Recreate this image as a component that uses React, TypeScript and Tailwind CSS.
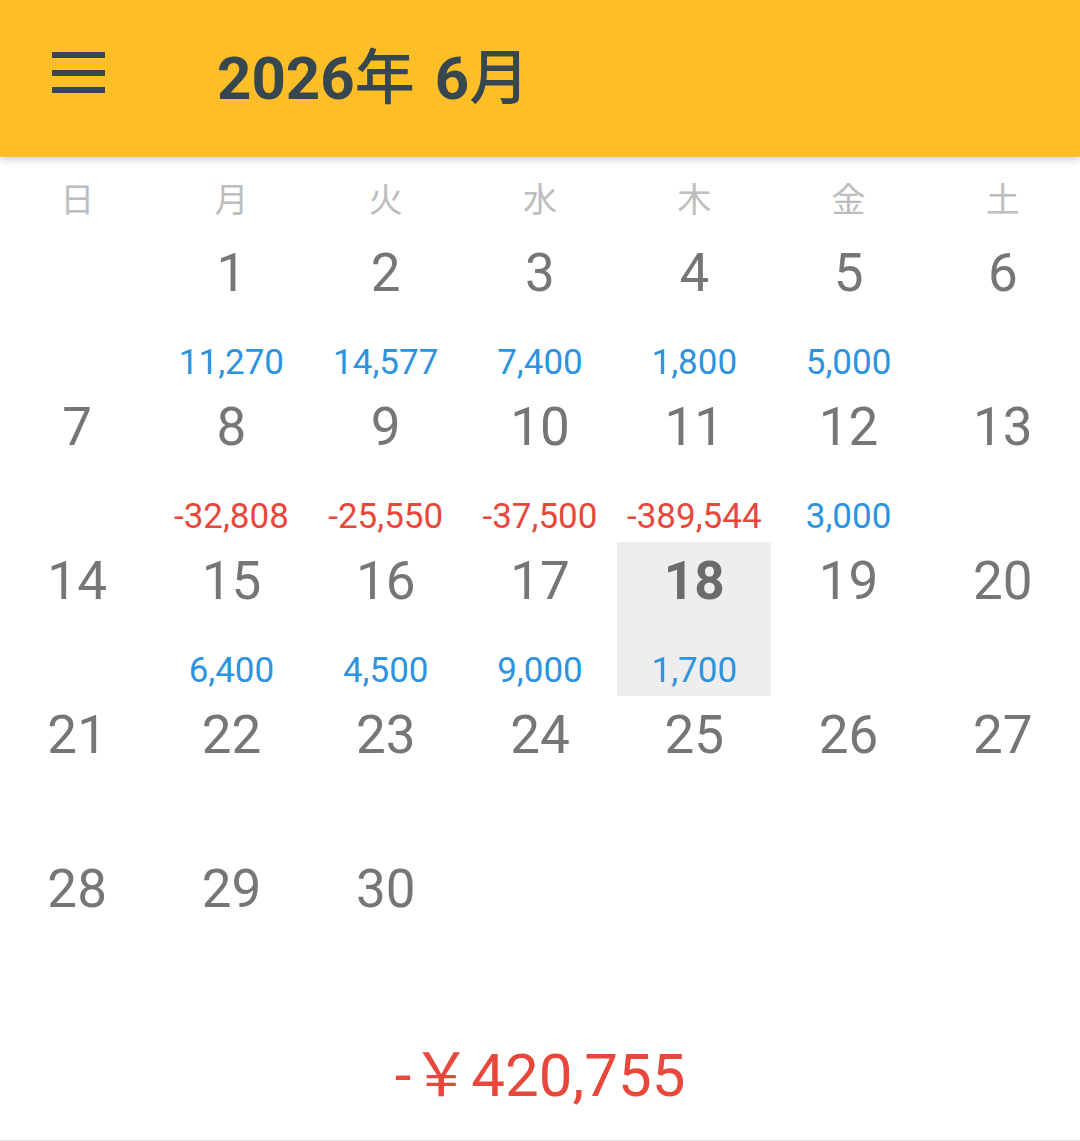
import React from "react";

type Day = { day: number; amount?: number; today?: boolean };

const WEEKDAYS = ["日", "月", "火", "水", "木", "金", "土"];

const amounts: Record<number, number> = {
  1: 11270,
  2: 14577,
  3: 7400,
  4: 1800,
  5: 5000,
  8: -32808,
  9: -25550,
  10: -37500,
  11: -389544,
  12: 3000,
  15: 6400,
  16: 4500,
  17: 9000,
  18: 1700,
};

// June 2026 starts on Monday
const buildCells = (): (Day | null)[] => {
  const cells: (Day | null)[] = [null];
  for (let d = 1; d <= 30; d++) {
    cells.push({ day: d, amount: amounts[d], today: d === 18 });
  }
  while (cells.length < 35) cells.push(null);
  return cells;
};

const fmt = (n: number) =>
  (n < 0 ? "-" : "") + Math.abs(n).toLocaleString("en-US");

const DayCell: React.FC<{ cell: Day | null }> = ({ cell }) => {
  if (!cell) return <div className="h-[154px]" />;
  return (
    <div
      className={`h-[154px] flex flex-col items-center pt-[11px] ${
        cell.today ? "bg-[#eeeeee]" : ""
      }`}
    >
      <div
        className={`text-[53px] leading-[56px] ${
          cell.today ? "font-bold text-[#6b6b6b]" : "text-[#767676]"
        }`}
      >
        {cell.day}
      </div>
      {cell.amount !== undefined && (
        <div
          className={`mt-[42px] text-[35px] leading-[40px] ${
            cell.amount < 0 ? "text-[#e8473b]" : "text-[#2e93de]"
          }`}
        >
          {fmt(cell.amount)}
        </div>
      )}
    </div>
  );
};

export default function App() {
  const cells = buildCells();
  return (
    <div
      className="w-[1080px] h-[1141px] bg-white flex flex-col overflow-hidden"
      style={{ fontFamily: "Roboto, 'Noto Sans CJK JP', sans-serif" }}
    >
      <header className="h-[157px] shrink-0 bg-[#febe27] flex items-center shadow-[0_3px_8px_rgba(0,0,0,0.18)] relative z-10">
        <button className="ml-[52px] w-[53px] h-[41px] flex flex-col justify-between -mt-[12px]">
          <span className="block h-[6px] w-full bg-[#37474f]" />
          <span className="block h-[6px] w-full bg-[#37474f]" />
          <span className="block h-[6px] w-full bg-[#37474f]" />
        </button>
        <h1 className="ml-[112px] text-[60px] font-bold text-[#37474f] flex items-baseline">
          <span>2026</span>
          <span className="font-medium">年</span>
          <span className="ml-[20px]">6</span>
          <span className="font-medium">月</span>
        </h1>
      </header>

      <div className="grid grid-cols-7 pt-[23px] h-[77px] shrink-0">
        {WEEKDAYS.map((w) => (
          <div
            key={w}
            className="text-center text-[34px] leading-[40px] text-[#bdbdbd]"
          >
            {w}
          </div>
        ))}
      </div>

      <div className="grid grid-cols-7">
        {cells.map((c, i) => (
          <DayCell key={i} cell={c} />
        ))}
      </div>

      <div className="flex-1 flex items-center justify-center border-b border-[#e0e0e0] pt-[8px]">
        <span className="text-[60px] text-[#e8473b]">-￥420,755</span>
      </div>
    </div>
  );
}
